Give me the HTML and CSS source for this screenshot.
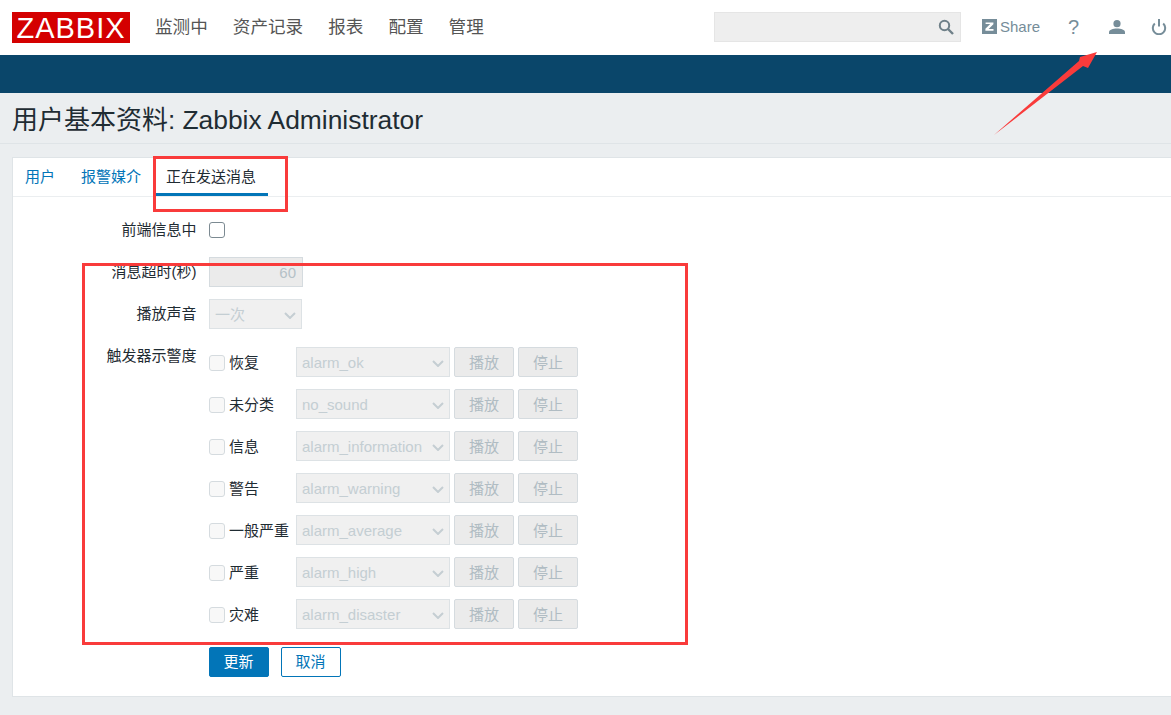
FILE: index.html
```html
<!DOCTYPE html>
<html lang="zh-CN">
<head>
<meta charset="utf-8">
<title>用户基本资料</title>
<link rel="stylesheet" href="styles.css">
</head>
<body>
<header class="topbar">
  <div class="logo">ZABBIX</div>
  <nav class="mainnav">
    <a>监测中</a><a>资产记录</a><a>报表</a><a>配置</a><a>管理</a>
  </nav>
  <div class="tools">
    <div class="search">
      <svg class="search-icon" viewBox="0 0 16 16" width="16" height="16"><circle cx="6.500" cy="6.500" r="4.700" fill="none" stroke="#6f8089" stroke-width="2"/><path d="M10 10l5 5" stroke="#6f8089" stroke-width="2.400" fill="none"/></svg>
    </div>
    <a class="share">
      <svg viewBox="0 0 15 15" width="15" height="15"><rect width="15" height="15" fill="#768d99"/><path d="M3.600 3.400h7.800v1.900L6.600 10h4.900v1.700H3.400V9.800l4.800-4.700H3.600z" fill="#fff"/></svg>
      <span>Share</span>
    </a>
    <span class="help">?</span>
    <svg class="user" viewBox="0 0 16 14" width="16" height="14"><circle cx="8" cy="3.700" r="3.600" fill="#768d99"/><path d="M0 14v-1.800C0 10 4 8.600 8 8.600s8 1.400 8 3.600V14z" fill="#768d99"/></svg>
    <svg class="power" viewBox="0 0 16 16" width="16" height="16"><path d="M3.800 4.500a6.200 6.200 0 1 0 8.400 0" fill="none" stroke="#768d99" stroke-width="2"/><path d="M8 0v7.500" stroke="#768d99" stroke-width="2"/></svg>
  </div>
</header>
<div class="subnav"></div>
<main class="page">
  <h1 class="title">用户基本资料: <span class="title-name">Zabbix Administrator</span></h1>
  <section class="card">
    <div class="tabs">
      <a class="tab">用户</a>
      <a class="tab">报警媒介</a>
      <a class="tab active">正在发送消息</a>
    </div>
    <form class="form">
      <div class="row">
        <label class="label">前端信息中</label>
        <span class="check"></span>
      </div>
      <div class="row">
        <label class="label">消息超时(秒)</label>
        <div class="input">60</div>
      </div>
      <div class="row">
        <label class="label">播放声音</label>
        <div class="select small">一次<svg class="chev" viewBox="0 0 12 7" width="12" height="7"><path d="M1 1l5 5 5-5" fill="none" stroke="#c5ced3" stroke-width="2"/></svg></div>
      </div>
      <div class="row sev first">
        <label class="label top">触发器示警度</label>
        <span class="check off"></span><span class="sevname">恢复</span>
        <div class="select">alarm_ok<svg class="chev" viewBox="0 0 12 7" width="12" height="7"><path d="M1 1l5 5 5-5" fill="none" stroke="#c5ced3" stroke-width="2"/></svg></div>
        <span class="btn">播放</span><span class="btn">停止</span>
      </div>
      <div class="row sev">
        <span class="label"></span>
        <span class="check off"></span><span class="sevname">未分类</span>
        <div class="select">no_sound<svg class="chev" viewBox="0 0 12 7" width="12" height="7"><path d="M1 1l5 5 5-5" fill="none" stroke="#c5ced3" stroke-width="2"/></svg></div>
        <span class="btn">播放</span><span class="btn">停止</span>
      </div>
      <div class="row sev">
        <span class="label"></span>
        <span class="check off"></span><span class="sevname">信息</span>
        <div class="select">alarm_information<svg class="chev" viewBox="0 0 12 7" width="12" height="7"><path d="M1 1l5 5 5-5" fill="none" stroke="#c5ced3" stroke-width="2"/></svg></div>
        <span class="btn">播放</span><span class="btn">停止</span>
      </div>
      <div class="row sev">
        <span class="label"></span>
        <span class="check off"></span><span class="sevname">警告</span>
        <div class="select">alarm_warning<svg class="chev" viewBox="0 0 12 7" width="12" height="7"><path d="M1 1l5 5 5-5" fill="none" stroke="#c5ced3" stroke-width="2"/></svg></div>
        <span class="btn">播放</span><span class="btn">停止</span>
      </div>
      <div class="row sev">
        <span class="label"></span>
        <span class="check off"></span><span class="sevname">一般严重</span>
        <div class="select">alarm_average<svg class="chev" viewBox="0 0 12 7" width="12" height="7"><path d="M1 1l5 5 5-5" fill="none" stroke="#c5ced3" stroke-width="2"/></svg></div>
        <span class="btn">播放</span><span class="btn">停止</span>
      </div>
      <div class="row sev">
        <span class="label"></span>
        <span class="check off"></span><span class="sevname">严重</span>
        <div class="select">alarm_high<svg class="chev" viewBox="0 0 12 7" width="12" height="7"><path d="M1 1l5 5 5-5" fill="none" stroke="#c5ced3" stroke-width="2"/></svg></div>
        <span class="btn">播放</span><span class="btn">停止</span>
      </div>
      <div class="row sev">
        <span class="label"></span>
        <span class="check off"></span><span class="sevname">灾难</span>
        <div class="select">alarm_disaster<svg class="chev" viewBox="0 0 12 7" width="12" height="7"><path d="M1 1l5 5 5-5" fill="none" stroke="#c5ced3" stroke-width="2"/></svg></div>
        <span class="btn">播放</span><span class="btn">停止</span>
      </div>
      <div class="row actions">
        <span class="label"></span>
        <span class="action primary">更新</span><span class="action ghost">取消</span>
      </div>
    </form>
  </section>
</main>
<div class="mark mark-tab"></div>
<div class="mark mark-form"></div>
<svg class="arrow" viewBox="0 0 110 86" width="110" height="86"><path d="M1 84L86 10 87 6 104 1 95 17 90 15z" fill="#f93b3b"/></svg>
</body>
</html>
```
FILE: styles.css
```css
* { box-sizing: border-box; }
html, body { margin: 0; height: 715px; overflow: hidden; }
body {
  position: relative;
  background: #ebeef0;
  color: #1f2c33;
  font: 15px/20px "Liberation Sans", "Noto Sans CJK SC", sans-serif;
}
.topbar {
  display: flex;
  align-items: center;
  height: 55px;
  background: #fff;
  padding-left: 12px;
}
.logo {
  width: 118px;
  height: 31px;
  margin-bottom: 1px;
  background: #d40000;
  color: #fff;
  font-size: 29px;
  line-height: 32px;
  text-align: center;
  letter-spacing: 1px;
}
.mainnav {
  display: flex;
  gap: 25px;
  margin-left: 25px;
  margin-bottom: 2px;
  font-size: 17.6px;
  color: #555;
}
.tools {
  display: flex;
  align-items: center;
  margin-left: auto;
  margin-bottom: 2px;
  color: #768d99;
}
.search {
  display: flex;
  align-items: center;
  justify-content: flex-end;
  width: 247px;
  height: 30px;
  padding-right: 6px;
  background: #eeeeee;
  border: 1px solid #e5e5e5;
}
.share {
  display: flex;
  align-items: center;
  gap: 3px;
  margin-left: 21px;
  font-size: 15px;
}
.help { margin-left: 28px; font-size: 20px; width: 12px; }
.user { margin-left: 29px; }
.power { margin-left: 26px; margin-right: 4px; }
.subnav { height: 38px; background: #0a466a; }
.page { padding-left: 12px; }
.title {
  margin: 0 0 13px -12px;
  padding: 0 0 6px 12px;
  height: 51px;
  border-bottom: 1px solid #dfe4e7;
  font-weight: 400;
  font-size: 26px;
  line-height: 54px;
}
.title-name { font-size: 26.4px; }
.card {
  height: 540px;
  background: #fff;
  border: 1px solid #dfe4e7;
  border-right: 0;
}
.tabs {
  display: flex;
  height: 39px;
  border-bottom: 1px solid #ebeef0;
}
.tab {
  height: 38px;
  padding: 0 12px;
  line-height: 37px;
  margin-right: 2px;
  color: #0275b8;
}
.tab.active {
  color: #1f2c33;
  border-bottom: 3px solid #0275b8;
  width: 114px;
  margin-left: -1px;
}
.form { padding-top: 12px; }
.row {
  display: flex;
  align-items: center;
  height: 42px;
}
.label {
  width: 183.500px;
  margin-right: 12.500px;
  text-align: right;
}
.label.top { align-self: flex-start; padding-top: 5px; }
.check {
  width: 16px;
  height: 16px;
  background: #fff;
  border: 1px solid #7c8a92;
  border-radius: 3px;
}
.check.off { margin-top: 2px; background: #f8f8f8; border-color: #d5dbdf; }
.input {
  width: 94px;
  height: 30px;
  padding-right: 6px;
  background: #ebebeb;
  border: 1px solid #d5dbdf;
  color: #b5c1c7;
  line-height: 29px;
  text-align: right;
}
.select {
  position: relative;
  width: 154px;
  height: 30px;
  padding-left: 5px;
  background: #f0f0f0;
  border: 1px solid #dde2e5;
  color: #c4ced3;
  line-height: 29px;
  white-space: nowrap;
  overflow: hidden;
}
.select.small { width: 93px; }
.chev { position: absolute; right: 5px; top: 12px; }
.sev.first { height: 42px; margin-top: 6px; }
.sevname { width: 67px; margin-top: 2px; margin-left: 4px; white-space: nowrap; }
.btn {
  width: 60px;
  height: 30px;
  margin-left: 4px;
  background: #ebebeb;
  border: 1px solid #d5dbdf;
  border-radius: 2px;
  color: #b0bcc3;
  line-height: 29px;
  text-align: center;
}
.actions { margin-top: 6px; gap: 12px; }
.actions .label { margin-right: 0; }
.action {
  width: 60px;
  height: 30px;
  border: 1px solid #0275b8;
  border-radius: 2px;
  line-height: 28px;
  text-align: center;
}
.primary { background: #0275b8; color: #fff; }
.ghost { background: #fff; color: #0275b8; }
.mark {
  position: absolute;
  border: 3px solid #f93b3b;
  pointer-events: none;
}
.mark-tab { left: 153px; top: 156px; width: 135px; height: 56px; }
.mark-form { left: 82px; top: 263px; width: 606px; height: 382px; }
.arrow { position: absolute; left: 993px; top: 51px; }
```
